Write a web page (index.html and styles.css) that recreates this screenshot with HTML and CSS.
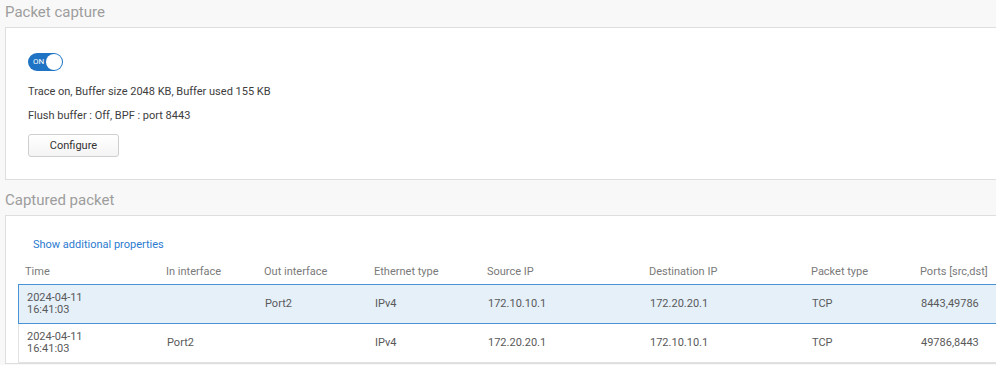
FILE: index.html
```html
<!DOCTYPE html>
<html>
<head>
<meta charset="utf-8">
<link rel="stylesheet" href="styles.css">
</head>
<body>
<div class="page">
  <h2 class="section-title">Packet capture</h2>
  <section class="panel panel-capture">
    <div class="toggle"><span class="toggle-label">ON</span><span class="toggle-knob"></span></div>
    <p class="info">Trace on, Buffer size 2048 KB, Buffer used 155 KB</p>
    <p class="info">Flush buffer : Off, BPF : port 8443</p>
    <button class="btn">Configure</button>
  </section>

  <h2 class="section-title second">Captured packet</h2>
  <section class="panel panel-packets">
    <a class="link" href="#">Show additional properties</a>
    <div class="grid">
      <div class="row head">
        <div>Time</div><div>In interface</div><div>Out interface</div><div>Ethernet type</div><div>Source IP</div><div>Destination IP</div><div>Packet type</div><div>Ports [src,dst]</div>
      </div>
      <div class="row data selected">
        <div>2024-04-11<br>16:41:03</div><div></div><div>Port2</div><div>IPv4</div><div>172.10.10.1</div><div>172.20.20.1</div><div>TCP</div><div>8443,49786</div>
      </div>
      <div class="row data">
        <div>2024-04-11<br>16:41:03</div><div>Port2</div><div></div><div>IPv4</div><div>172.20.20.1</div><div>172.10.10.1</div><div>TCP</div><div>49786,8443</div>
      </div>
    </div>
  </section>
</div>
</body>
</html>
```

FILE: styles.css
```css
html, body {
  margin: 0;
  padding: 0;
  overflow: hidden;
  background: #f8f8f8;
  font-family: Roboto, "Liberation Sans", sans-serif;
  font-size: 11px;
  color: #444;
}
.page {
  width: 100%;
}
.section-title {
  margin: 0;
  padding: 2px 5px 5px;
  height: 20px;
  line-height: 20px;
  font-size: 15px;
  font-weight: 400;
  color: #9d9d9d;
}
.section-title.second {
  margin-top: 8px;
}
.panel {
  margin-left: 5px;
  background: #fff;
  border: 1px solid #dedede;
  border-right: none;
}
.panel-capture {
  padding: 25px 0 22px 22px;
}
.toggle {
  position: relative;
  width: 35px;
  height: 18px;
  border-radius: 9px;
  background: #1f73c4;
  box-sizing: border-box;
}
.toggle-label {
  position: absolute;
  left: 5px;
  top: 0;
  line-height: 18px;
  font-size: 8px;
  color: #fff;
}
.toggle-knob {
  position: absolute;
  right: 1px;
  top: 1px;
  width: 16px;
  height: 16px;
  border-radius: 50%;
  background: #fff;
}
.info {
  margin: 0;
  line-height: 14px;
  color: #3d3d3d;
}
.toggle + .info {
  margin-top: 14px;
}
.info + .info {
  margin-top: 10px;
}
.btn {
  display: block;
  margin-top: 11px;
  width: 91px;
  height: 23px;
  padding: 0;
  border: 1px solid #cfcfcf;
  border-radius: 3px;
  background: linear-gradient(#ffffff, #f4f4f4);
  font-family: inherit;
  font-size: 11px;
  color: #333;
}
.panel-packets {
  padding: 22px 0 0 12px;
}
.link {
  display: block;
  margin-left: 15px;
  line-height: 14px;
  color: #2b7bcf;
  text-decoration: none;
}
.grid {
  margin-top: 6px;
}
.row {
  display: grid;
  grid-template-columns: 139px 98px 110px 113px 162px 162px 109px 1fr;
  align-items: center;
}
.row > div {
  padding-left: 9px;
  white-space: nowrap;
}
.row.head {
  height: 26px;
  color: #7a7a7a;
}
.row.head > div:first-child {
  padding-left: 7px;
}
.row.data {
  height: 39px;
  box-sizing: border-box;
  line-height: 12px;
  color: #595959;
  border-left: 1px solid #e2e2e2;
  border-bottom: 1px solid #e2e2e2;
}
.row.data > div:first-child {
  padding-left: 8px;
}
.row.selected {
  height: 40px;
  background: #e5f0f9;
  border-top: 1px solid #4a92d6;
  border-bottom: 1px solid #4a92d6;
  border-left-color: #4a92d6;
}
```
